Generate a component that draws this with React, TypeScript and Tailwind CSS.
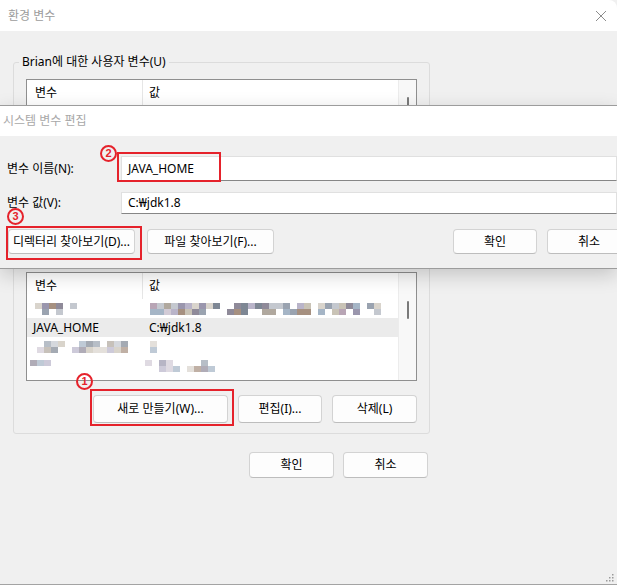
import React from "react";

const palette = [
  "#b9b4c9",
  "#9a96ad",
  "#c9c3b6",
  "#a5b5c6",
  "#8f8a99",
  "#d2cbd6",
  "#b0a89e",
  "#9aa3b0",
  "#c4c8cf",
  "#a69080",
  "#7e8794",
  "#d9d4cc",
  "#b8a5b5",
];

// pseudo random blur blocks, stands in for the pixelated rows
const cells = (seed: number, n: number, density: number) => {
  let s = seed;
  const next = () => {
    s = (s * 9301 + 49297) % 233280;
    return s / 233280;
  };
  return Array.from({ length: n }, () => {
    if (next() > density) return "";
    return palette[Math.floor(next() * palette.length)];
  });
};

const Mosaic = ({
  seed,
  cols,
  density = 0.8,
  className = "",
}: {
  seed: number;
  cols: number;
  density?: number;
  className?: string;
}) => {
  const top = cells(seed, cols, density);
  const bottom = cells(seed + 77, cols, density * 0.8);
  return (
    <div className={`flex flex-col ${className}`}>
      {[top, bottom].map((row, r) => (
        <div key={r} className="flex">
          {row.map((c, i) => (
            <div key={i} className="w-[7px] h-[6px]" style={{ background: c || "transparent" }} />
          ))}
        </div>
      ))}
    </div>
  );
};

const Btn = ({ label, w, h = "h-[28px]" }: { label: string; w: string; h?: string }) => (
  <button
    className={`${w} ${h} flex items-center justify-center bg-[#fdfdfd] border border-[#d3d3d3] border-b-[#bdbdbd] rounded-[4px] text-[12px] text-black`}
  >
    {label}
  </button>
);

// red circled number drawn on the screenshot
const Mark = ({ n, className }: { n: string; className: string }) => (
  <span
    className={`absolute w-[17px] h-[17px] rounded-full border-2 border-[#e5222b] bg-[#f0f0f0]/0 flex items-center justify-center text-[11px] leading-none font-bold text-[#e5222b] font-['Liberation_Sans',sans-serif] ${className}`}
  >
    {n}
  </span>
);

const ListHeader = () => (
  <div className="flex h-[26px] bg-white">
    <div className="w-[116px] pl-[8px] flex items-center border-r border-[#e6e6e6]">변수</div>
    <div className="flex-1 pl-[6px] flex items-center">값</div>
  </div>
);

const ScrollCol = ({ thumbTop }: { thumbTop: string }) => (
  <div className="w-[18px] bg-[#f8f8f8] border-l border-[#ececec] flex justify-center">
    <div className={`w-[2px] h-[18px] rounded-full bg-[#7a7a7a] ${thumbTop}`} />
  </div>
);

export default function App() {
  return (
    <div className="w-[617px] h-[585px] relative overflow-hidden bg-[#f0f0f0] font-['Noto_Sans','Noto_Sans_CJK_KR',sans-serif] text-[12px] text-black">
      {/* 환경 변수 */}
      <div className="flex flex-col h-full border-b border-[#a3a3a3] rounded-tr-[8px]">
        <div className="h-[31px] bg-white flex items-center justify-between pl-[8px] pr-[10px] rounded-tr-[8px]">
          <span className="text-[#9c9c9c]">환경 변수</span>
          <svg width="12" height="12" viewBox="0 0 12 12">
            <path d="M1 1 L11 11 M11 1 L1 11" stroke="#8c8c8c" strokeWidth="1" />
          </svg>
        </div>

        <div className="px-[13px]">
          <fieldset className="mt-[23px] w-[417px] border border-[#dcdcdc] rounded-[3px] pb-[10px]">
            <legend className="ml-[5px] px-[3px] leading-[16px]">Brian에 대한 사용자 변수(U)</legend>
            <div className="mx-[12px] mt-[9px] h-[150px] border border-[#8f8f8f] flex bg-white">
              <div className="flex-1">
                <ListHeader />
              </div>
              <ScrollCol thumbTop="mt-[17px] h-[8px]" />
            </div>
          </fieldset>

          <fieldset className="mt-[7px] w-[417px] border border-[#dcdcdc] rounded-[3px] pb-[10px]">
            <legend className="ml-[5px] px-[3px] leading-[16px]">시스템 변수(S)</legend>
            <div className="mx-[12px] mt-[9px] h-[109px] border border-[#8f8f8f] flex bg-white overflow-hidden">
              <div className="flex-1">
                <ListHeader />
                <div className="flex h-[19px] items-center">
                  <div className="w-[116px]">
                    <Mosaic seed={11} cols={8} className="ml-[8px]" />
                  </div>
                  <Mosaic seed={23} cols={34} density={0.85} className="ml-[7px]" />
                </div>
                <div className="flex h-[19px] items-center bg-[#ebebeb]">
                  <div className="w-[116px] pl-[6px]">JAVA_HOME</div>
                  <div className="pl-[6px]">C:₩jdk1.8</div>
                </div>
                <div className="flex h-[19px] items-center opacity-70">
                  <div className="w-[116px]">
                    <Mosaic seed={41} cols={15} density={0.7} className="ml-[3px]" />
                  </div>
                  <Mosaic seed={5} cols={1} density={1} className="ml-[7px]" />
                </div>
                <div className="flex h-[19px] items-center opacity-70">
                  <div className="w-[116px]">
                    <Mosaic seed={63} cols={3} density={0.9} className="ml-[3px]" />
                  </div>
                  <Mosaic seed={87} cols={10} density={0.75} className="ml-[2px]" />
                </div>
              </div>
              <ScrollCol thumbTop="mt-[28px]" />
            </div>

            <div className="mx-[12px] mt-[14px] flex justify-end gap-[10px]">
              <div className="relative">
                <Btn label="새로 만들기(W)..." w="w-[135px]" />
                <div className="absolute left-[-3px] top-[-6px] w-[144px] h-[37px] border-2 border-[#e5222b]" />
                <Mark n="1" className="left-[-17px] top-[-22px]" />
              </div>
              <Btn label="편집(I)..." w="w-[84px]" />
              <Btn label="삭제(L)" w="w-[85px]" />
            </div>
          </fieldset>

          <div className="w-[417px] mt-[18px] pr-[2px] flex justify-end gap-[9px]">
            <Btn label="확인" w="w-[85px]" h="h-[26px]" />
            <Btn label="취소" w="w-[85px]" h="h-[26px]" />
          </div>
        </div>
      </div>

      <svg className="absolute right-[3px] bottom-[3px]" width="9" height="9" viewBox="0 0 9 9">
        <g fill="#9a9a9a">
          <rect x="7" y="1" width="1.5" height="1.5" />
          <rect x="4" y="4" width="1.5" height="1.5" />
          <rect x="7" y="4" width="1.5" height="1.5" />
          <rect x="1" y="7" width="1.5" height="1.5" />
          <rect x="4" y="7" width="1.5" height="1.5" />
          <rect x="7" y="7" width="1.5" height="1.5" />
        </g>
      </svg>

      {/* 시스템 변수 편집 window on top */}
      <div className="absolute left-0 top-[105px] w-[617px] h-[164px] bg-[#f0f0f0] border-y border-[#9c9c9c] shadow-[0_6px_18px_rgba(0,0,0,0.18)] overflow-hidden">
        <div className="h-[30px] bg-white flex items-center pl-[3px] text-[#a8a8a8]">시스템 변수 편집</div>

        <div className="mt-[20px] flex items-center h-[25px]">
          <div className="w-[121px] pl-[7px]">변수 이름(N):</div>
          <div className="relative flex-1 h-full">
            <div className="h-full bg-white border border-[#e0e0e0] border-b-[#868686] pl-[6px] flex items-center">
              JAVA_HOME
            </div>
            <div className="absolute left-[-4px] top-[-4px] w-[104px] h-[30px] border-2 border-[#e5222b]" />
            <Mark n="2" className="left-[-21px] top-[-11px]" />
          </div>
        </div>

        <div className="mt-[11px] flex items-center h-[22px]">
          <div className="w-[121px] pl-[7px]">변수 값(V):</div>
          <div className="flex-1 h-full bg-white border border-[#e0e0e0] border-b-[#868686] pl-[6px] flex items-center">
            C:₩jdk1.8
          </div>
        </div>

        <div className="mt-[15px] flex pl-[8px]">
          <div className="relative">
            <Btn label="디렉터리 찾아보기(D)..." w="w-[127px]" h="h-[25px]" />
            <div className="absolute left-[-2px] top-[-3px] w-[136px] h-[34px] border-2 border-[#e5222b]" />
            <Mark n="3" className="left-[-1px] top-[-21px]" />
          </div>
          <div className="ml-[12px]">
            <Btn label="파일 찾아보기(F)..." w="w-[127px]" h="h-[25px]" />
          </div>
          <div className="ml-[179px] flex gap-[10px] shrink-0">
            <Btn label="확인" w="w-[84px]" h="h-[25px]" />
            <Btn label="취소" w="w-[84px]" h="h-[25px]" />
          </div>
        </div>
      </div>
    </div>
  );
}
